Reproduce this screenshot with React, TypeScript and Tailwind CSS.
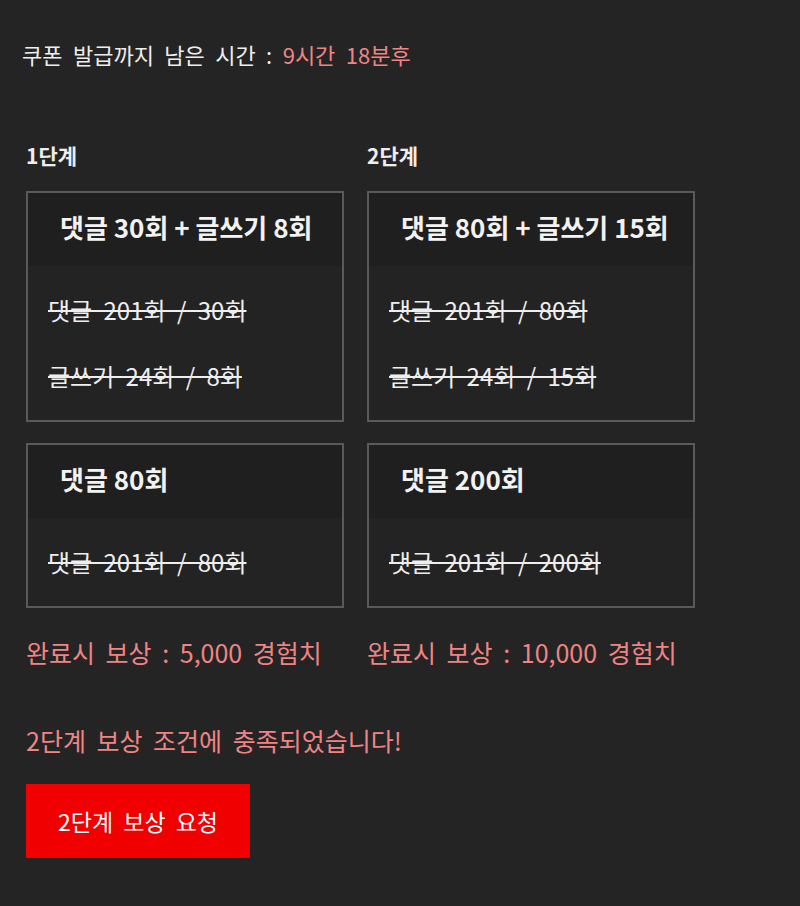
const font = { fontFamily: '"Noto Sans CJK KR", "Noto Sans", sans-serif' }

function Box({ title, items, width }: { title: string; items: string[]; width: string }) {
  return (
    <div className={`${width} border-2 border-[#5a5a5a] bg-[#232323]`}>
      <div className="h-[73px] flex items-center pl-[32px] pb-[5px] bg-[#1f1f1f] text-[26px] leading-[36px] font-bold text-[#f2f2f2] whitespace-nowrap">
        {title}
      </div>
      <div className="pt-[11px] pb-[11px]">
        {items.map((t) => (
          <div
            key={t}
            className="h-[66px] flex items-center pl-[20px] text-[24px] leading-[36px] [word-spacing:6px] text-[#eeeeee] line-through decoration-2 whitespace-nowrap"
          >
            {t}
          </div>
        ))}
      </div>
    </div>
  )
}

function Stage({ label, boxes, reward, width }: { label: string; boxes: { title: string; items: string[] }[]; reward: string; width: string }) {
  return (
    <div className="flex flex-col">
      <div className="h-[36px] flex items-center text-[21px] font-bold text-[#eeeeee] mb-[17px]">{label}</div>
      <div className="flex flex-col gap-[21px]">
        {boxes.map((b) => (
          <Box key={b.title} title={b.title} items={b.items} width={width} />
        ))}
      </div>
      <div className="mt-[26px] text-[25px] leading-[36px] [word-spacing:5px] text-[#f08484] whitespace-nowrap">{reward}</div>
    </div>
  )
}

export default function App() {
  return (
    <div className="min-h-[906px] w-[800px] bg-[#242424] pl-[26px] pt-[36px]" style={font}>
      <div className="-ml-[4px] text-[22px] leading-[36px] [word-spacing:5.5px] text-[#eeeeee] h-[36px] flex items-center whitespace-pre">
        쿠폰 발급까지 남은 시간 : <span className="text-[#f08484]">9시간 18분후</span>
      </div>

      <div className="flex gap-[23px] mt-[66px]">
        <Stage
          label="1단계"
          width="w-[318px]"
          reward="완료시 보상 : 5,000 경험치"
          boxes={[
            { title: '댓글 30회 + 글쓰기 8회', items: ['댓글 201회 / 30회', '글쓰기 24회 / 8회'] },
            { title: '댓글 80회', items: ['댓글 201회 / 80회'] },
          ]}
        />
        <Stage
          label="2단계"
          width="w-[328px]"
          reward="완료시 보상 : 10,000 경험치"
          boxes={[
            { title: '댓글 80회 + 글쓰기 15회', items: ['댓글 201회 / 80회', '글쓰기 24회 / 15회'] },
            { title: '댓글 200회', items: ['댓글 201회 / 200회'] },
          ]}
        />
      </div>

      <div className="mt-[52px] text-[25px] leading-[36px] [word-spacing:5px] text-[#f08484]">2단계 보상 조건에 충족되었습니다!</div>

      <button className="mt-[26px] w-[224px] h-[74px] bg-[#f00000] text-white text-[23px] [word-spacing:5px]">2단계 보상 요청</button>
    </div>
  )
}
